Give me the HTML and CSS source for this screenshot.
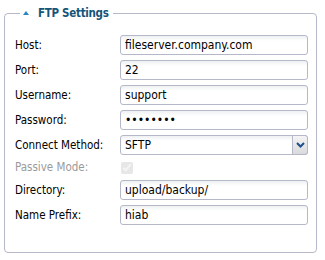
FILE: index.html
```html
<!DOCTYPE html>
<html lang="en">
<head>
    <meta charset="UTF-8">
    <meta name="viewport" content="width=device-width, initial-scale=1.0">
    <title>FTP Settings</title>
    <link rel="stylesheet" href="styles.css">
</head>
<body>
    <fieldset class="panel">
        <legend><span class="toggle"></span>FTP Settings</legend>
        <div class="form-grid">
            <label for="host">Host:</label>
            <input class="field" type="text" id="host" value="fileserver.company.com">

            <label for="port">Port:</label>
            <input class="field" type="text" id="port" value="22">

            <label for="username">Username:</label>
            <input class="field" type="text" id="username" value="support">

            <label for="password">Password:</label>
            <input class="field" type="password" id="password" value="secret12">

            <label for="method">Connect Method:</label>
            <div class="combo">
                <input class="field" type="text" id="method" value="SFTP">
                <span class="trigger">
                    <svg width="9" height="6" viewBox="0 0 9 6"><path d="M1 1 L4.5 4.5 L8 1" fill="none" stroke="#1d4f8a" stroke-width="2"/></svg>
                </span>
            </div>

            <label class="disabled" for="passive">Passive Mode:</label>
            <div class="check-row"><input type="checkbox" id="passive" checked disabled></div>

            <label for="directory">Directory:</label>
            <input class="field" type="text" id="directory" value="upload/backup/">

            <label for="prefix">Name Prefix:</label>
            <input class="field" type="text" id="prefix" value="hiab">
        </div>
    </fieldset>
</body>
</html>
```

FILE: styles.css
```css
    body {
        margin: 0;
        padding: 7px 8px 0 4px;
        font-family: "DejaVu Sans Condensed", "DejaVu Sans", sans-serif;
        font-size: 11.5px;
        color: #000;
        background: #fff;
    }
    .panel {
        margin: 0;
        padding: 15px 8px 27px 10px;
        border: 1px solid #b5b8c8;
        border-radius: 4px;
        height: 246px;
        box-sizing: border-box;
    }
    .panel legend {
        margin-left: 5px;
        padding: 0 4px 0 3px;
        font-size: 11.5px;
        line-height: 13px;
        letter-spacing: -0.3px;
        font-weight: bold;
        color: #16557a;
    }
    .toggle {
        display: inline-block;
        width: 0;
        height: 0;
        border-left: 3px solid transparent;
        border-right: 3px solid transparent;
        border-bottom: 4px solid #2a86c4;
        margin: 0 9px 2px 0;
        vertical-align: middle;
    }
    .form-grid {
        display: grid;
        grid-template-columns: 105px 1fr;
        row-gap: 5px;
        align-items: center;
    }
    .form-grid label {
        line-height: 20px;
    }
    .form-grid label.disabled {
        color: #9a9a9a;
        line-height: 15px;
    }
    .field {
        width: 100%;
        height: 20px;
        box-sizing: border-box;
        margin: 0;
        padding: 0 4px;
        border: 1px solid #b5b8c8;
        border-radius: 3px;
        background: linear-gradient(#eef0f2, #fff 5px);
        font-family: inherit;
        font-size: 12px;
        color: #000;
        outline: none;
    }
    .combo {
        display: flex;
        position: relative;
    }
    .trigger {
        position: absolute;
        right: 0;
        top: 0;
        width: 16px;
        height: 20px;
        box-sizing: border-box;
        border: 1px solid #b5b8c8;
        border-radius: 0 3px 3px 0;
        background: linear-gradient(#f4f4f4, #d9dadc);
        display: flex;
        align-items: center;
        justify-content: center;
    }
    .check-row {
        height: 15px;
        display: flex;
        align-items: center;
    }
    .check-row input {
        margin: 0 0 0 1px;
        width: 12px;
        height: 12px;
        opacity: 0.5;
    }
```
